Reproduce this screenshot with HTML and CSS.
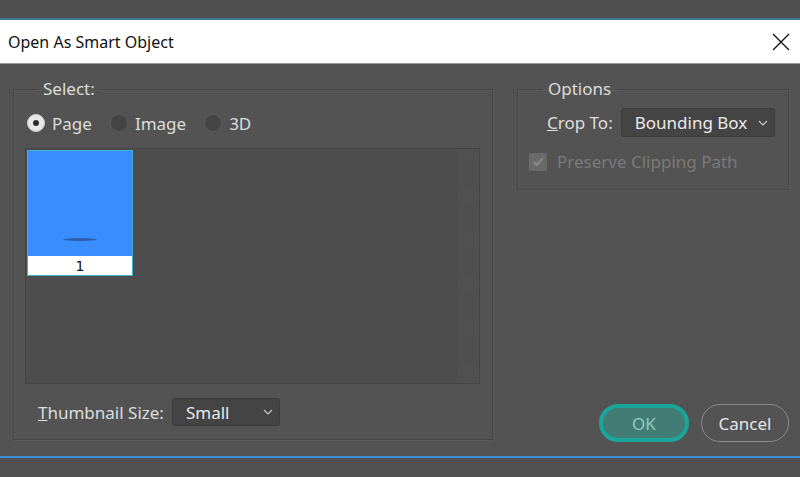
FILE: index.html
```html
<!DOCTYPE html>
<html lang="en">
<head>
  <meta charset="UTF-8">
  <title>Open As Smart Object</title>
  <link rel="stylesheet" href="styles.css">
</head>
<body>
  <div class="topbar"></div>

  <div class="titlebar">
    <span class="title">Open As Smart Object</span>
    <svg class="close" width="18" height="18" viewBox="0 0 18 18">
      <path d="M1 1 L17 17 M17 1 L1 17" stroke="#111" stroke-width="1.3" fill="none"/>
    </svg>
  </div>

  <div class="content">
    <fieldset class="group select-group">
      <legend>Select:</legend>

      <div class="radios">
        <label class="radio"><span class="dot checked"></span>Page</label>
        <label class="radio"><span class="dot"></span>Image</label>
        <label class="radio"><span class="dot"></span>3D</label>
      </div>

      <div class="thumbs">
        <div class="thumb-list">
          <div class="thumb">
            <div class="page"><span class="mark"></span></div>
            <div class="num">1</div>
          </div>
        </div>
        <div class="scrollbar">
          <span></span><span></span><span></span><span></span><span></span>
        </div>
      </div>

      <div class="size-row">
        <span class="label"><u>T</u>humbnail Size:</span>
        <div class="dropdown small">
          <span>Small</span>
          <svg width="10" height="6" viewBox="0 0 10 6"><path d="M1 1 L5 5 L9 1" stroke="#c8c8c8" stroke-width="1.2" fill="none"/></svg>
        </div>
      </div>
    </fieldset>

    <div class="side">
      <fieldset class="group options-group">
        <legend>Options</legend>
        <div class="crop-row">
          <span class="label"><u>C</u>rop To:</span>
          <div class="dropdown crop">
            <span>Bounding Box</span>
            <svg width="10" height="6" viewBox="0 0 10 6"><path d="M1 1 L5 5 L9 1" stroke="#c8c8c8" stroke-width="1.2" fill="none"/></svg>
          </div>
        </div>
        <label class="check-row">
          <span class="box">
            <svg width="12" height="10" viewBox="0 0 12 10"><path d="M1.5 5 L4.5 8 L10.5 1.5" stroke="#8a8a8a" stroke-width="2" fill="none"/></svg>
          </span>
          Preserve Clipping Path
        </label>
      </fieldset>

      <div class="buttons">
        <button class="btn ok">OK</button>
        <button class="btn cancel">Cancel</button>
      </div>
    </div>
  </div>

  <div class="bottombar"></div>
</body>
</html>
```

FILE: styles.css
```css
body {
  margin: 0;
  background: #505050;
  font-family: 'Noto Sans', 'Open Sans', sans-serif;
  font-size: 17px;
  color: #dedede;
  width: 800px;
  height: 477px;
  overflow: hidden;
}

.topbar {
  height: 18px;
  background: #4f4f4f;
  border-bottom: 2px solid #3b7894;
}

.titlebar {
  height: 43px;
  background: #fff;
  border-bottom: 1px solid #9a9a9a;
  display: flex;
  align-items: center;
  justify-content: space-between;
  padding: 0 10px 0 8px;
}

.title {
  color: #111;
  font-size: 16px;
}

.content {
  height: 392px;
  background: #535353;
  box-sizing: border-box;
  padding: 16px 11px 16px 13px;
  display: flex;
  gap: 24px;
}

.group {
  margin: 0;
  border: 1px solid #454545;
  box-shadow: inset 1px 1px 0 #5b5b5b, 1px 1px 0 #5b5b5b;
  padding: 0;
  min-width: 0;
}

.group legend {
  padding: 0 6px;
  color: #dcdcdc;
  line-height: 18px;
}

.select-group {
  width: 480px;
  box-sizing: border-box;
  padding: 0 12px 0 11px;
}

.select-group legend {
  margin-left: 12px;
}

.radios {
  display: flex;
  gap: 18px;
  margin: 13px 0 0 2px;
  height: 24px;
  align-items: center;
}

.radio {
  display: flex;
  align-items: center;
  gap: 7px;
}

.dot {
  width: 18px;
  height: 18px;
  border-radius: 50%;
  background: #444;
  border: 1px solid #5a5a5a;
  box-sizing: border-box;
  position: relative;
}

.dot.checked {
  background: #e8e8e8;
  border-color: #d0d0d0;
}

.dot.checked::after {
  content: '';
  position: absolute;
  left: 5px;
  top: 5px;
  width: 6px;
  height: 6px;
  border-radius: 50%;
  background: #2a2a2a;
}

.thumbs {
  margin-top: 13px;
  height: 236px;
  border: 1px solid #444;
  background: #4d4d4d;
  display: flex;
  box-sizing: border-box;
}

.thumb-list {
  flex: 1;
  padding: 1px;
}

.thumb {
  width: 106px;
  height: 126px;
  border: 1px solid #3fb1cc;
  box-sizing: border-box;
  display: flex;
  flex-direction: column;
}

.page {
  flex: 1;
  background: #3a8dff;
  display: flex;
  justify-content: center;
  align-items: flex-end;
  padding-bottom: 15px;
}

.mark {
  width: 34px;
  height: 3px;
  border-radius: 50%;
  background: #2b5faa;
}

.num {
  height: 19px;
  background: #fff;
  color: #111;
  font-family: 'DejaVu Sans', sans-serif;
  font-size: 14px;
  text-align: center;
  line-height: 20px;
}

.scrollbar {
  width: 22px;
  background: #505050;
  display: flex;
  flex-direction: column;
  gap: 14px;
  padding-top: 10px;
  box-sizing: border-box;
}

.scrollbar span {
  height: 30px;
  background: #4f4f4f;
}

.size-row {
  display: flex;
  align-items: center;
  margin: 14px 0 0 13px;
  gap: 8px;
}

.dropdown {
  height: 28px;
  background: #444;
  border: 1px solid #3c3c3c;
  border-radius: 3px;
  box-sizing: border-box;
  display: flex;
  align-items: center;
  justify-content: space-between;
  padding: 0 6px 0 13px;
  color: #eaeaea;
}

.dropdown.small {
  width: 108px;
}

.side {
  flex: 1;
  display: flex;
  flex-direction: column;
  justify-content: space-between;
}

.options-group {
  height: 110px;
  box-sizing: border-box;
  padding: 0 13px 0 11px;
}

.options-group legend {
  margin-left: 13px;
}

.crop-row {
  display: flex;
  align-items: center;
  gap: 8px;
  margin: 10px 0 0 18px;
}

.dropdown.crop {
  width: 154px;
  height: 29px;
}

.check-row {
  display: flex;
  align-items: center;
  gap: 10px;
  margin-top: 13px;
  color: #7a7a7a;
}

.box {
  width: 18px;
  height: 18px;
  background: #6a6a6a;
  border-radius: 2px;
  display: flex;
  align-items: center;
  justify-content: center;
}

.buttons {
  display: flex;
  justify-content: flex-end;
  gap: 12px;
  margin-bottom: -2px;
}

.btn {
  height: 38px;
  border-radius: 19px;
  font-family: inherit;
  font-size: 17px;
  box-sizing: border-box;
}

.ok {
  width: 90px;
  background: #417d75;
  border: 4px solid #1aa59b;
  color: #8fcac2;
}

.cancel {
  width: 88px;
  background: transparent;
  border: 1px solid #8c8c8c;
  color: #e6e6e6;
}

.bottombar {
  height: 2px;
  background: #3a8dd0;
}
```
